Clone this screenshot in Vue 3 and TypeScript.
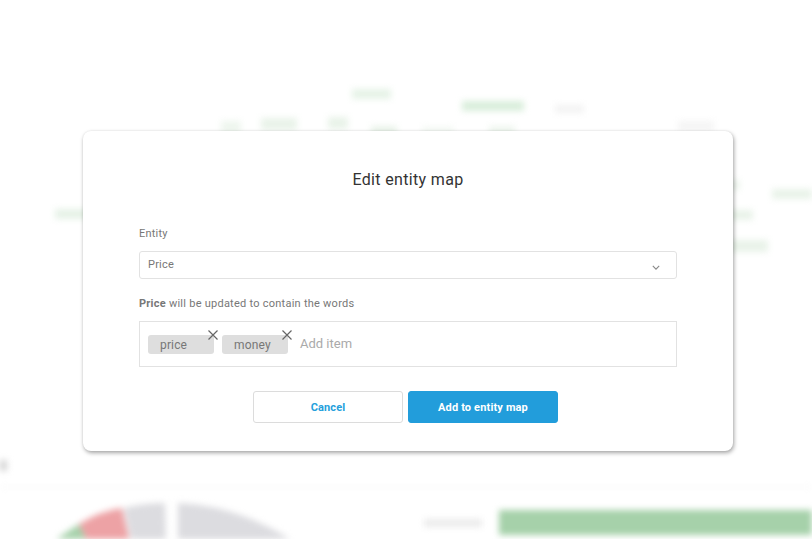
<script setup lang="ts">
const blobs = [
  { x: 352, y: 89, w: 39, h: 10, c: '#e6f3e7' },
  { x: 462, y: 101, w: 62, h: 10, c: '#d9eedb' },
  { x: 555, y: 105, w: 29, h: 8, c: '#f3f3f3' },
  { x: 221, y: 121, w: 20, h: 12, c: '#eef6ee' },
  { x: 261, y: 118, w: 36, h: 12, c: '#e9f3e9' },
  { x: 328, y: 117, w: 20, h: 12, c: '#e9f3e9' },
  { x: 371, y: 126, w: 26, h: 10, c: '#e9f3e9' },
  { x: 422, y: 127, w: 32, h: 8, c: '#f3f8f3' },
  { x: 489, y: 126, w: 26, h: 10, c: '#eef6ee' },
  { x: 678, y: 121, w: 36, h: 10, c: '#f5f5f5' },
  { x: 772, y: 189, w: 40, h: 10, c: '#e9f3e9' },
  { x: 728, y: 180, w: 12, h: 10, c: '#eef6ee' },
  { x: 728, y: 210, w: 25, h: 10, c: '#e9f3e9' },
  { x: 728, y: 240, w: 40, h: 12, c: '#e9f3e9' },
  { x: 55, y: 209, w: 40, h: 10, c: '#e6f2e7' },
  { x: 0, y: 460, w: 7, h: 11, c: '#d4d4d4' },
  { x: 424, y: 519, w: 58, h: 8, c: '#ebebeb' },
]
</script>

<template>
  <div class="page">
    <svg class="backdrop" viewBox="0 0 812 539" width="812" height="539" aria-hidden="true">
      <rect v-for="(b, i) in blobs" :key="i" :x="b.x" :y="b.y" :width="b.w" :height="b.h" :fill="b.c" />
      <rect x="0" y="486" width="812" height="2" fill="#f7f7f7" />
      <rect x="499" y="510" width="330" height="25" fill="#a6d1aa" />
      <path d="M170 711 L79 524 L40 550 L30 620 Z" fill="#a6d1aa" />
      <path d="M170 711 L79 524 Q100 511 122 508 Z" fill="#eda2a5" />
      <path d="M170 711 L124 508 Q145 503 165 503 Z" fill="#dcdce0" />
      <path d="M178 711 L178 503 Q235 505 290 539 L300 711 Z" fill="#dcdce0" />
    </svg>

    <div class="overlay">
      <section class="modal">
        <h2 class="title">Edit entity map</h2>

        <label class="label">Entity</label>
        <div class="select">
          <span>Price</span>
          <svg class="chevron" viewBox="0 0 10 6" width="8" height="5" aria-hidden="true">
            <path d="M1 1 L5 5 L9 1" fill="none" stroke="#888" stroke-width="1.4" />
          </svg>
        </div>

        <p class="hint"><b>Price</b> will be updated to contain the words</p>

        <div class="tags">
          <span class="tag">
            price
            <svg class="close" viewBox="0 0 12 12" width="12" height="12" aria-hidden="true">
              <path d="M1.5 1.5 L10.5 10.5 M10.5 1.5 L1.5 10.5" stroke="#666" stroke-width="1.2" />
            </svg>
          </span>
          <span class="tag">
            money
            <svg class="close" viewBox="0 0 12 12" width="12" height="12" aria-hidden="true">
              <path d="M1.5 1.5 L10.5 10.5 M10.5 1.5 L1.5 10.5" stroke="#666" stroke-width="1.2" />
            </svg>
          </span>
          <span class="placeholder">Add item</span>
        </div>

        <div class="actions">
          <button class="btn cancel">Cancel</button>
          <button class="btn primary">Add to entity map</button>
        </div>
      </section>
    </div>
  </div>
</template>

<style>
html, body { margin: 0; background: #fff; }
</style>

<style scoped>
.page {
  position: relative;
  width: 812px;
  height: 539px;
  overflow: hidden;
  background: #fff;
  font-family: Roboto, "Liberation Sans", sans-serif;
}
.backdrop {
  position: absolute;
  inset: 0;
  filter: blur(3px);
}
.overlay {
  position: absolute;
  inset: 0;
  padding: 131px 0 0 83px;
  box-sizing: border-box;
}
.modal {
  box-sizing: border-box;
  width: 650px;
  height: 320px;
  padding: 0 56px;
  background: #fff;
  border-radius: 8px;
  box-shadow: 1px 2px 4px rgba(0, 0, 0, 0.35), 0 0 2px rgba(0, 0, 0, 0.08);
}
.title {
  margin: 0;
  padding-top: 39px;
  height: 20px;
  line-height: 20px;
  font-size: 16px;
  font-weight: 400;
  letter-spacing: 0.35px;
  text-align: center;
  color: #333;
}
.label {
  display: block;
  margin-top: 37px;
  font-size: 11px;
  line-height: 13px;
  letter-spacing: 0.2px;
  color: #777;
}
.select {
  box-sizing: border-box;
  display: flex;
  align-items: center;
  justify-content: space-between;
  height: 28px;
  margin-top: 11px;
  padding: 0 16px 0 8px;
  border: 1px solid #e2e2e2;
  border-radius: 3px;
  font-size: 11px;
  letter-spacing: 0.2px;
  color: #777;
}
.select span { position: relative; top: -1px; }
.chevron { margin-top: 5px; }
.hint {
  margin: 18px 0 0;
  font-size: 11px;
  line-height: 13px;
  letter-spacing: 0.25px;
  color: #777;
}
.tags {
  box-sizing: border-box;
  display: flex;
  align-items: center;
  height: 46px;
  margin-top: 11px;
  padding-left: 8px;
  border: 1px solid #e2e2e2;
  gap: 8px;
}
.tag {
  position: relative;
  box-sizing: border-box;
  width: 66px;
  height: 19px;
  margin-top: 1px;
  padding-left: 12px;
  line-height: 20px;
  font-size: 12px;
  letter-spacing: 0.15px;
  color: #777;
  background: #dedede;
  border-radius: 3px;
}
.close {
  position: absolute;
  top: -6px;
  right: -5px;
}
.placeholder {
  margin-left: 4px;
  margin-bottom: 2px;
  font-size: 13px;
  letter-spacing: 0;
  color: #aaa;
}
.actions {
  display: flex;
  justify-content: center;
  gap: 5px;
  margin-top: 24px;
  padding-right: 5px;
}
.btn {
  box-sizing: border-box;
  width: 150px;
  height: 32px;
  border-radius: 3px;
  font-family: inherit;
  font-size: 11px;
  font-weight: 700;
  letter-spacing: 0.15px;
}
.cancel {
  background: #fff;
  border: 1px solid #dcdcdc;
  color: #259fdc;
}
.primary {
  background: #229ddb;
  border: 1px solid #229ddb;
  color: #fff;
}
</style>
